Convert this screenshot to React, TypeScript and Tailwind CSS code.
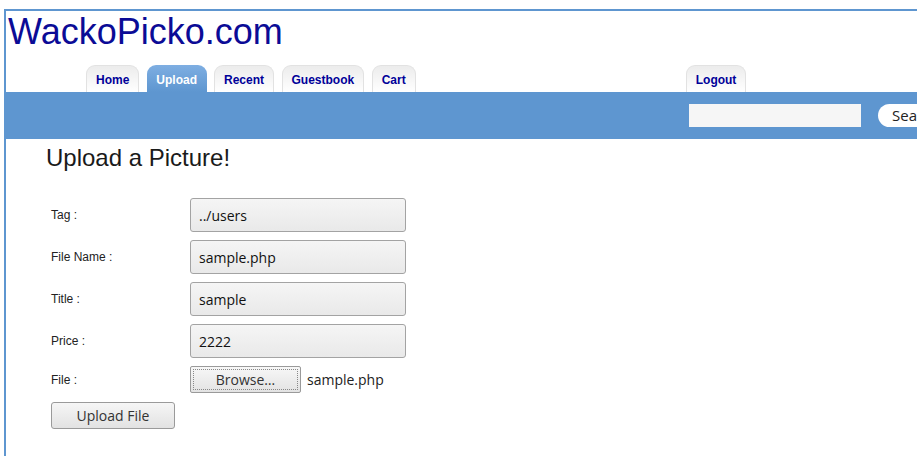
export default function App() {
  const tabs = [
    { label: "Home", active: false },
    { label: "Upload", active: true },
    { label: "Recent", active: false },
    { label: "Guestbook", active: false },
    { label: "Cart", active: false },
  ];

  const fields = [
    { label: "Tag :", value: "../users" },
    { label: "File Name :", value: "sample.php" },
    { label: "Title :", value: "sample" },
    { label: "Price :", value: "2222" },
  ];

  const tabClass = (active: boolean) =>
    active
      ? "h-[27px] px-[9.5px] pt-[2px] flex items-center rounded-t-[9px] bg-gradient-to-b from-[#7eaee2] to-[#5e96d0] text-white"
      : "h-[27px] px-[9px] pt-[2px] flex items-center rounded-t-[9px] border border-b-0 border-[#e2e2e2] bg-gradient-to-b from-[#ececec] to-white text-[#000099]";

  return (
    <div className="w-[917px] h-[456px] overflow-hidden bg-white pt-[9px] pl-[4px] font-['Liberation_Sans',Arial,sans-serif]">
      <div className="h-full border-l-2 border-t-2 border-[#5e96d0]">
        <h1 className="pl-[2px] text-[36px] leading-[41px] text-[#0b0b96] font-normal">
          WackoPicko.com
        </h1>

        <div className="mt-[13px] flex items-end pl-[80px] text-[12px] font-bold">
          <div className="flex gap-[7.5px]">
            {tabs.map((t) => (
              <div key={t.label} className={tabClass(t.active)}>
                {t.label}
              </div>
            ))}
          </div>
          <div className={"ml-[270px] px-[8.5px] " + tabClass(false)}>Logout</div>
        </div>

        <div className="h-[47px] bg-[#5e96d0] flex items-center">
          <div className="ml-[683px] w-[172px] h-[23px] bg-[#f6f6f6] shrink-0" />
          <div className="ml-[17px] h-[23px] pl-[14px] pr-[14px] rounded-full bg-white flex items-center text-[15px] text-[#222] font-['Open_Sans',sans-serif] shrink-0">
            Search
          </div>
        </div>

        <div className="pl-[40px] mt-[5px]">
          <h2 className="text-[24px] leading-[27px] text-[#1a1a1a] font-normal">
            Upload a Picture!
          </h2>
        </div>

        <div className="mt-[27px] pl-[45px] flex flex-col gap-[8px] text-[12px] text-[#222]">
          {fields.map((f) => (
            <div key={f.label} className="flex items-center">
              <div className="w-[139px]">{f.label}</div>
              <div className="w-[216px] h-[34px] border border-[#a3a3a3] rounded-[3px] bg-gradient-to-b from-[#f5f5f5] to-[#e9e9e9] flex items-center pl-[8px] text-[14px] text-[#111] font-['Open_Sans',sans-serif]">
                {f.value}
              </div>
            </div>
          ))}

          <div className="flex items-center">
            <div className="w-[139px]">File :</div>
            <div className="w-[111px] h-[27px] border border-[#9a9a9a] rounded-[2px] bg-gradient-to-b from-[#f7f7f7] to-[#e3e3e3] p-[2px]">
              <div className="h-full border border-dotted border-[#888] flex items-center justify-center text-[14px] text-[#333] font-['Open_Sans',sans-serif]">
                Browse…
              </div>
            </div>
            <div className="ml-[6px] text-[14px] text-[#222] font-['Open_Sans',sans-serif]">
              sample.php
            </div>
          </div>

          <div className="mt-[1px] w-[124px] h-[27px] border border-[#9a9a9a] rounded-[3px] bg-gradient-to-b from-[#f6f6f6] to-[#e2e2e2] flex items-center justify-center text-[14px] text-[#333] font-['Open_Sans',sans-serif]">
            Upload File
          </div>
        </div>
      </div>
    </div>
  );
}
